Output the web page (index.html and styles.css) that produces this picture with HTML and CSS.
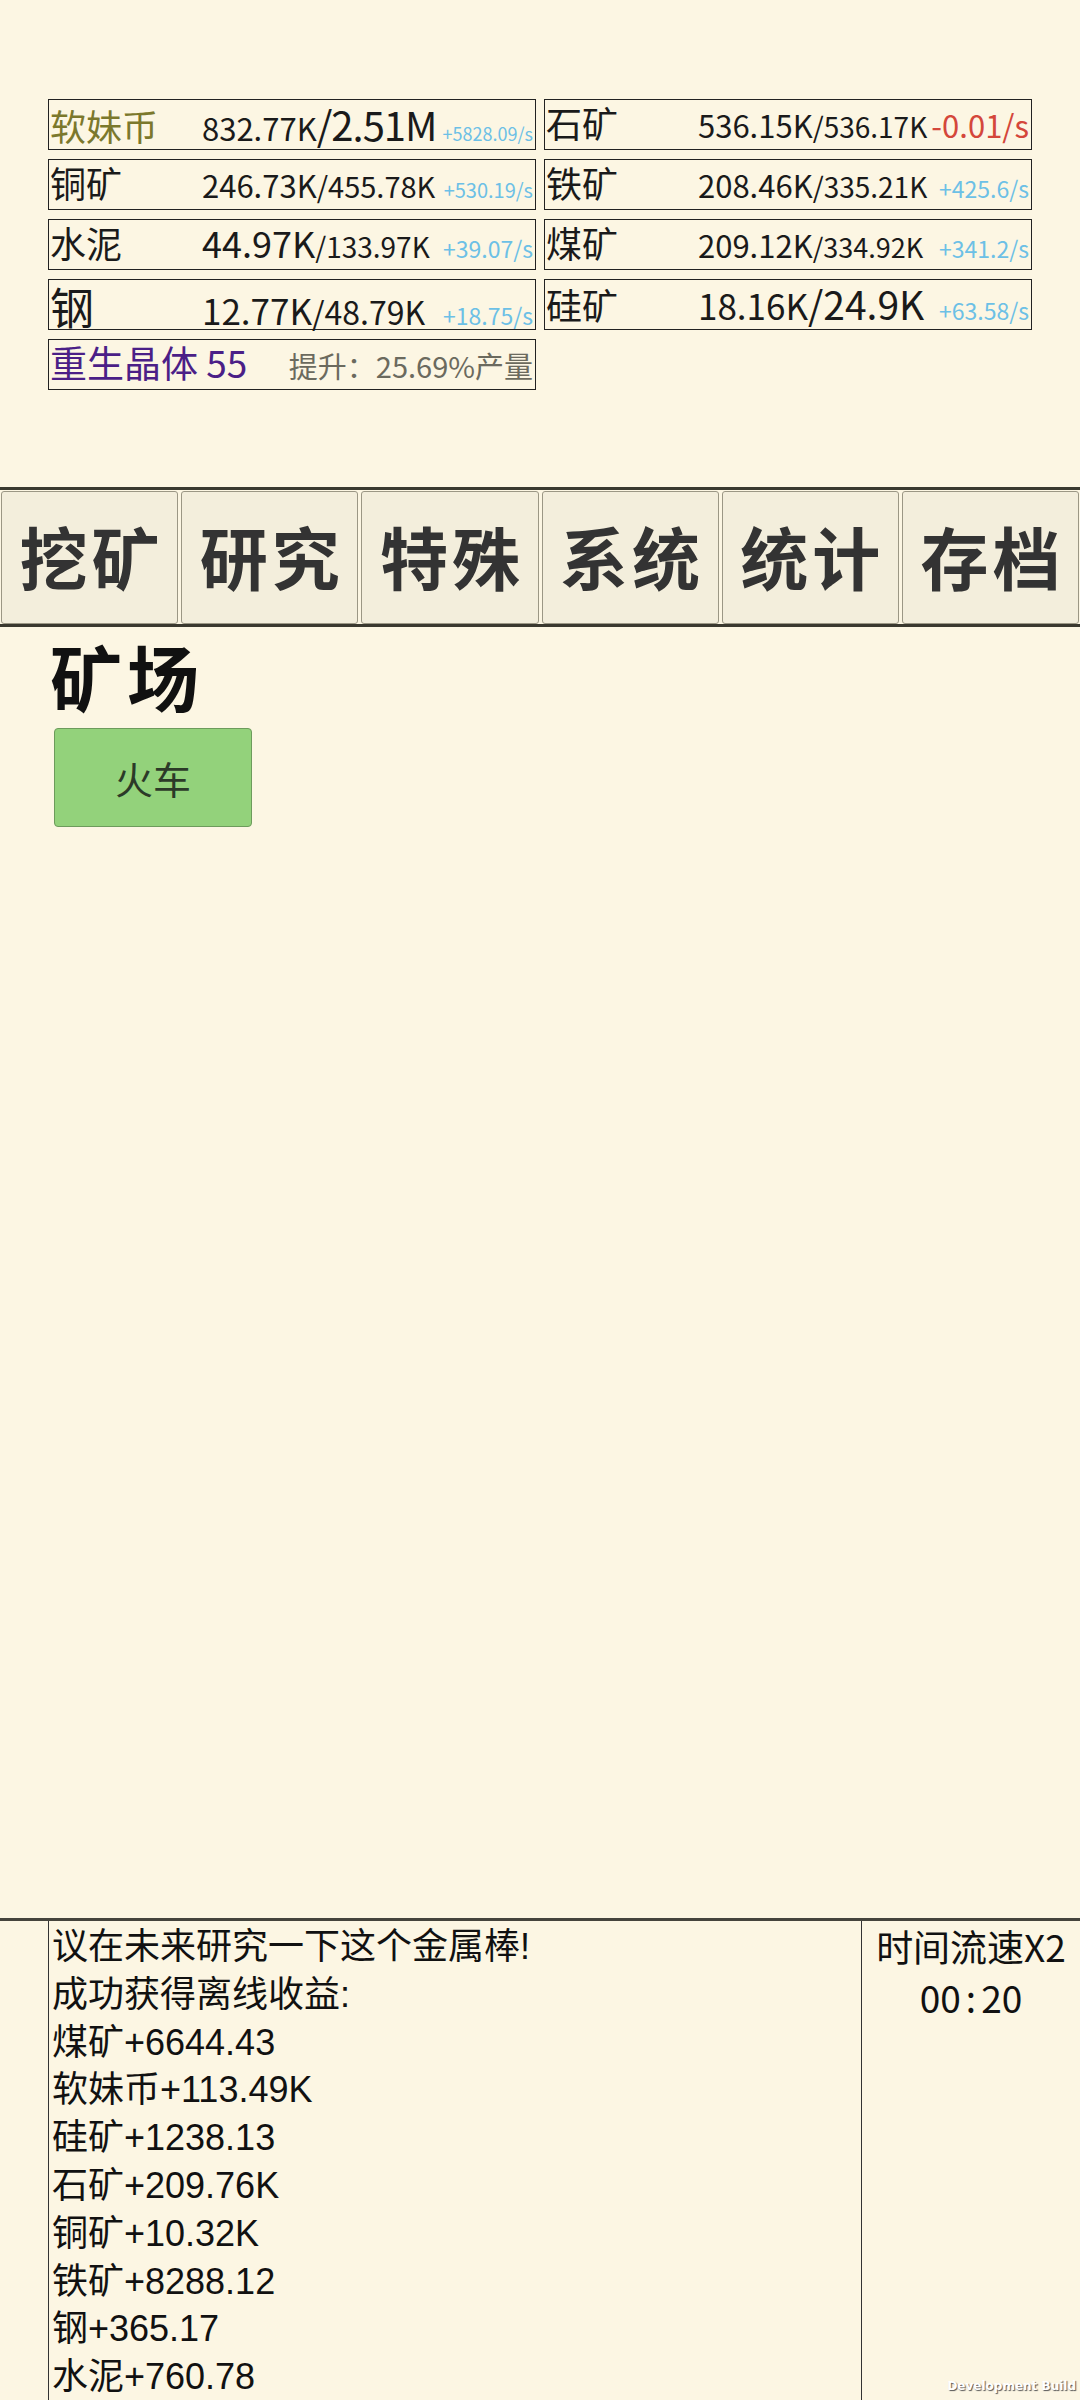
FILE: index.html
```html
<!DOCTYPE html>
<html lang="zh-CN">
<head>
  <meta charset="UTF-8" />
  <meta name="viewport" content="width=device-width, initial-scale=1.0"/>
  <title>挖矿</title>
  <link rel="stylesheet" href="styles.css">
</head>
<body>

  <div class="res-grid">
    <div class="cell">
      <span class="name coin">软妹币</span>
      <span class="f31">832.77K</span><span class="f40 narrow">/2.51M</span>
      <span class="rate f18">+5828.09/s</span>
    </div>
    <div class="cell">
      <span class="name">石矿</span>
      <span class="f31">536.15K</span><span class="f28">/536.17K</span>
      <span class="rate neg f31">-0.01/s</span>
    </div>
    <div class="cell">
      <span class="name">铜矿</span>
      <span class="f31">246.73K</span><span class="f29">/455.78K</span>
      <span class="rate f20">+530.19/s</span>
    </div>
    <div class="cell">
      <span class="name">铁矿</span>
      <span class="f31">208.46K</span><span class="f28">/335.21K</span>
      <span class="rate f23">+425.6/s</span>
    </div>
    <div class="cell">
      <span class="name">水泥</span>
      <span class="f36">44.97K</span><span class="f28">/133.97K</span>
      <span class="rate f23">+39.07/s</span>
    </div>
    <div class="cell">
      <span class="name">煤矿</span>
      <span class="f31">209.12K</span><span class="f27">/334.92K</span>
      <span class="rate f23">+341.2/s</span>
    </div>
    <div class="cell">
      <span class="name f44">钢</span>
      <span class="f35">12.77K</span><span class="f32">/48.79K</span>
      <span class="rate f23">+18.75/s</span>
    </div>
    <div class="cell">
      <span class="name">硅矿</span>
      <span class="f35">18.16K</span><span class="f39">/24.9K</span>
      <span class="rate f23">+63.58/s</span>
    </div>
    <div class="cell">
      <span class="rebirth">重生晶体 55</span>
      <span class="gain">提升：25.69%产量</span>
    </div>
  </div>

  <nav class="tabs">
    <div class="tab">挖矿</div>
    <div class="tab">研究</div>
    <div class="tab">特殊</div>
    <div class="tab">系统</div>
    <div class="tab">统计</div>
    <div class="tab">存档</div>
  </nav>

  <section class="mine">
    <h1>矿场</h1>
    <button class="train">火车</button>
  </section>

  <div class="log">
    <div class="log-gutter"></div>
    <div class="log-text">
      <div>议在未来研究一下这个金属棒!</div>
      <div>成功获得离线收益:</div>
      <div>煤矿+6644.43</div>
      <div>软妹币+113.49K</div>
      <div>硅矿+1238.13</div>
      <div>石矿+209.76K</div>
      <div>铜矿+10.32K</div>
      <div>铁矿+8288.12</div>
      <div>钢+365.17</div>
      <div>水泥+760.78</div>
    </div>
    <div class="speed">
      <div>时间流速X2</div>
      <div>00<span class="colon">:</span>20</div>
    </div>
  </div>

  <div class="dev-build">Development Build</div>

</body>
</html>
```

FILE: styles.css
```css
body {
  margin: 0;
  height: 2400px;
  overflow: hidden;
  position: relative;
  background: #fcf6e3;
  color: #1a1a1a;
  font-family: "Noto Sans CJK SC", sans-serif;
}

/* resource panel */
.res-grid {
  display: grid;
  grid-template-columns: 488px 488px;
  column-gap: 8px;
  row-gap: 9px;
  padding: 99px 0 0 48px;
}

.cell {
  display: flex;
  align-items: baseline;
  height: 51px;
  box-sizing: border-box;
  border: 1.5px solid #222;
  padding: 4px 2px 0 1px;
  white-space: nowrap;
  line-height: 1;
}

.name {
  width: 152px;
  flex: none;
  font-size: 36px;
}

.coin {
  color: #7b782c;
}

.narrow {
  letter-spacing: -1px;
}

.rate {
  margin-left: auto;
  color: #6cc0e6;
}

.neg {
  color: #d4473b;
}

.rebirth {
  font-size: 37px;
  color: #4b1f87;
}

.gain {
  margin-left: auto;
  font-size: 29px;
  color: #6b6a5e;
}

.f18 { font-size: 18px; }
.f20 { font-size: 20px; }
.f23 { font-size: 23px; }
.f27 { font-size: 27px; }
.f28 { font-size: 28px; }
.f29 { font-size: 29px; }
.f31 { font-size: 31px; }
.f32 { font-size: 32px; }
.f35 { font-size: 35px; }
.f36 { font-size: 36px; }
.f39 { font-size: 39px; }
.f40 { font-size: 40px; }
.f44 { font-size: 44px; }

/* tab bar */
.tabs {
  margin-top: 97px;
  border-top: 3px solid #3a392f;
  border-bottom: 3px solid #3a392f;
  padding: 1px 1px 0;
  display: grid;
  grid-template-columns: repeat(6, 1fr);
  gap: 3px;
}

.tab {
  height: 133px;
  box-sizing: border-box;
  background: #f3eedc;
  border: 1px solid #9b9785;
  border-radius: 3px;
  color: #333;
  font-size: 68px;
  font-weight: 700;
  line-height: 127px;
  text-align: center;
  letter-spacing: 4px;
  text-indent: 4px;
}

/* mine page */
.mine {
  height: 1283px;
  box-sizing: border-box;
  padding-left: 50px;
}

.mine h1 {
  margin: 8px 0 0;
  font-size: 72px;
  line-height: 80px;
  font-weight: 700;
  letter-spacing: 5px;
  color: #111;
}

.train {
  display: block;
  margin: 13px 0 0 4px;
  width: 198px;
  height: 99px;
  background: #93d27b;
  border: 1px solid #6d9b5c;
  border-radius: 4px;
  font-family: inherit;
  font-size: 38px;
  color: #2c3a28;
  padding: 0;
}

/* message log */
.log {
  display: flex;
  height: 490px;
  box-sizing: border-box;
  border-top: 3px solid #45443c;
  overflow: hidden;
}

.log-gutter {
  width: 48px;
  flex: none;
  border-right: 1.5px solid #333;
}

.log-text {
  width: 809px;
  flex: none;
  border-right: 1.5px solid #333;
  padding: 2px 0 0 3px;
  font-family: "Liberation Sans", "Noto Sans CJK SC", sans-serif;
  font-size: 36px;
  line-height: 47.8px;
  color: #111;
}

.speed {
  flex: 1;
  text-align: center;
  font-size: 37px;
  line-height: 51px;
  color: #111;
}

.colon {
  margin: 0 5px;
}

.dev-build {
  position: absolute;
  right: 4px;
  bottom: 7px;
  font-family: "DejaVu Sans", sans-serif;
  font-size: 12px;
  font-weight: bold;
  color: #fff;
  text-shadow: 1px 1px 1px #555;
}
```
